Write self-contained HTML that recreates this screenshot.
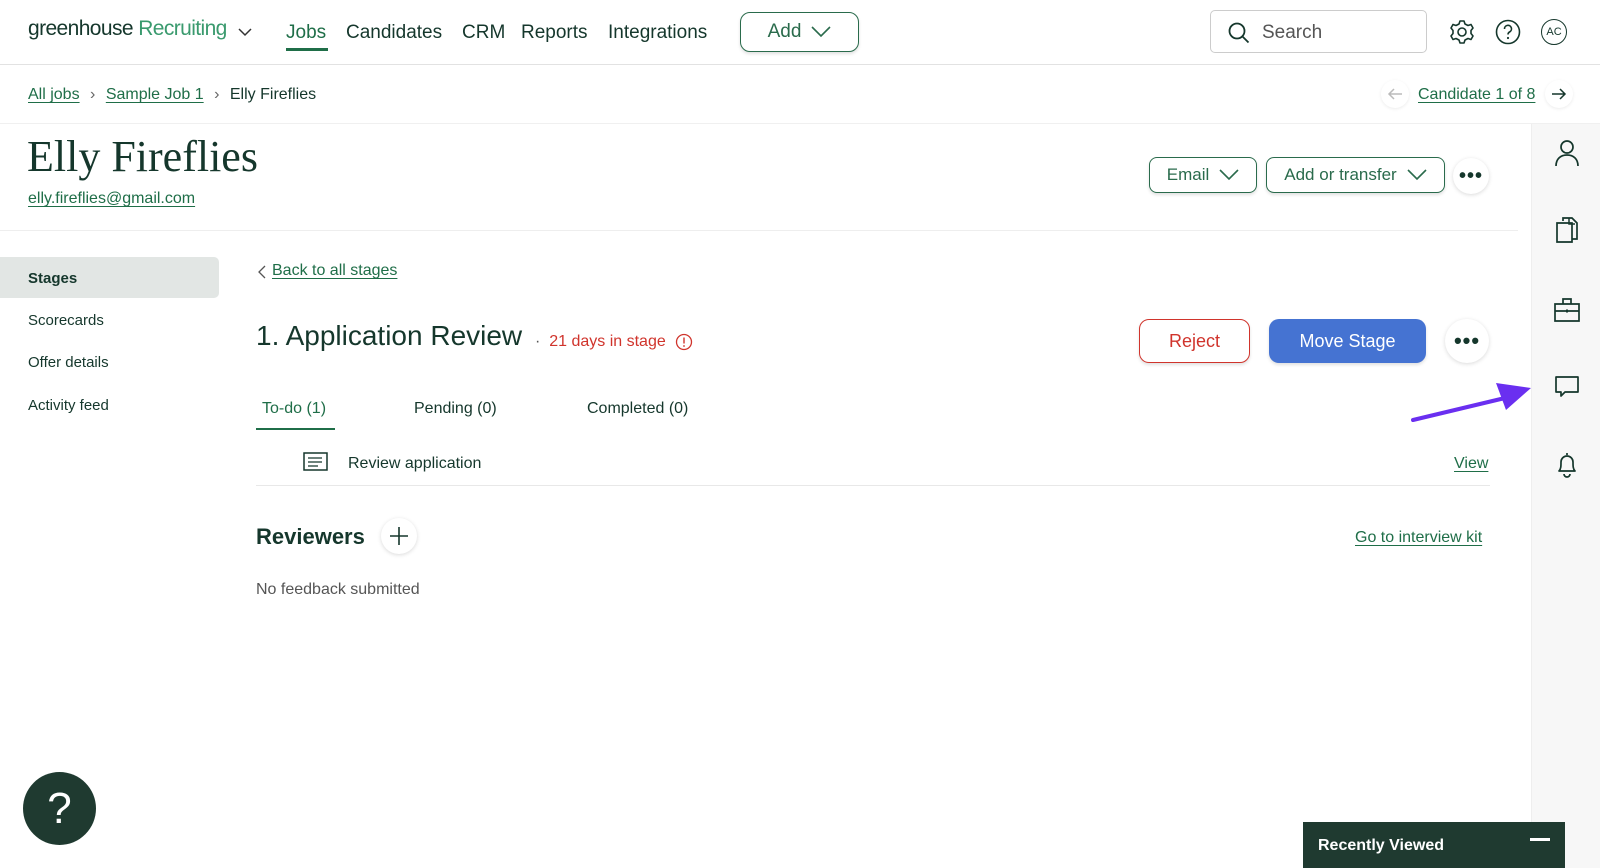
<!DOCTYPE html>
<html><head><meta charset="utf-8"><style>
*{box-sizing:border-box;margin:0;padding:0}
body{width:1600px;height:868px;overflow:hidden;background:#fff;font-family:"Liberation Sans",sans-serif;color:#15372c;position:relative}
.a{position:absolute;white-space:nowrap}
.lnk{color:#1f6e48;text-decoration:underline;text-underline-offset:3px}
.btn{position:absolute;border:1.5px solid #2a6b4c;border-radius:8px;color:#2a6b4c;font-size:17px;display:flex;align-items:center;justify-content:center;gap:10px;box-shadow:0 2px 3px rgba(0,0,0,.12);background:#fff}
.circ{position:absolute;border-radius:50%;background:#fff;box-shadow:0 1px 4px rgba(0,0,0,.15);display:flex;align-items:center;justify-content:center}
svg{display:block}
</style></head><body>
<div class="a" style="left:28px;top:17px;font-size:21px;letter-spacing:-0.6px"><span style="color:#15372c">greenhouse</span> <span style="color:#3a9a6e">Recruiting</span></div>
<svg class="a" style="left:238px;top:28px" width="14" height="9"><path d="M1 1l6 6 6-6" fill="none" stroke="#333" stroke-width="1.5"/></svg>
<div class="a" style="left:286px;top:22px;font-size:19px;color:#1f6e48">Jobs</div>
<div class="a" style="left:286px;top:48px;width:42px;height:3px;background:#1f6e48"></div>
<div class="a" style="left:346px;top:22px;font-size:19px">Candidates</div>
<div class="a" style="left:462px;top:22px;font-size:19px">CRM</div>
<div class="a" style="left:521px;top:22px;font-size:19px">Reports</div>
<div class="a" style="left:608px;top:22px;font-size:19px">Integrations</div>
<div class="btn" style="left:740px;top:12px;width:119px;height:40px;border-radius:10px;font-size:19px">Add <svg width="20" height="12"><path d="M1 1l9 9 9-9" fill="none" stroke="#2a6b4c" stroke-width="1.6"/></svg></div>
<div class="a" style="left:1210px;top:10px;width:217px;height:43px;border:1.5px solid #ccc;border-radius:5px"></div>
<svg class="a" style="left:1227px;top:21px" width="24" height="24"><circle cx="10" cy="10" r="7.5" fill="none" stroke="#15372c" stroke-width="1.8"/><path d="M15.5 15.5l6 6" stroke="#15372c" stroke-width="1.8"/></svg>
<div class="a" style="left:1262px;top:22px;font-size:19px;color:#555">Search</div>
<svg class="a" style="left:1449px;top:19px" width="26" height="26" viewBox="0 0 26 26"><circle cx="13" cy="13" r="4" fill="none" stroke="#15372c" stroke-width="1.6"/><path d="M11 2h4l1 3 3 1.5 3-1 2 3.5-2 2.5v3l2 2.5-2 3.5-3-1-3 1.5-1 3h-4l-1-3-3-1.5-3 1-2-3.5 2-2.5v-3l-2-2.5 2-3.5 3 1 3-1.5z" fill="none" stroke="#15372c" stroke-width="1.6" stroke-linejoin="round"/></svg>
<svg class="a" style="left:1495px;top:19px" width="26" height="26"><circle cx="13" cy="13" r="11.5" fill="none" stroke="#15372c" stroke-width="1.6"/><path d="M9.5 10a3.5 3.5 0 1 1 5 3c-1.2.7-1.5 1.3-1.5 2.5" fill="none" stroke="#15372c" stroke-width="1.6"/><circle cx="13" cy="19" r="1.1" fill="#15372c"/></svg>
<div class="a" style="left:1541px;top:19px;width:26px;height:26px;border:1.6px solid #15372c;border-radius:50%;font-size:11px;display:flex;align-items:center;justify-content:center">AC</div>
<div class="a" style="left:0;top:64px;width:1600px;height:1px;background:#e2e2e2"></div>
<div class="a" style="left:28px;top:86px;font-size:16px"><span class="lnk">All jobs</span> <span style="color:#666;margin:0 6px">›</span> <span class="lnk">Sample Job 1</span> <span style="color:#666;margin:0 6px">›</span> Elly Fireflies</div>
<div class="circ" style="left:1381px;top:80px;width:28px;height:28px;box-shadow:0 1px 3px rgba(0,0,0,.08)"><svg width="16" height="12"><path d="M15 6H2M7 1L2 6l5 5" fill="none" stroke="#bbb" stroke-width="1.5"/></svg></div>
<div class="a lnk" style="left:1418px;top:86px;font-size:16px">Candidate 1 of 8</div>
<div class="circ" style="left:1545px;top:80px;width:28px;height:28px;box-shadow:0 1px 3px rgba(0,0,0,.08)"><svg width="16" height="12"><path d="M1 6h13M9 1l5 5-5 5" fill="none" stroke="#15372c" stroke-width="1.5"/></svg></div>
<div class="a" style="left:0;top:123px;width:1600px;height:1px;background:#f0f0f0"></div>
<div class="a" style="left:1531px;top:124px;width:69px;height:744px;background:#f7f7f7;border-left:1px solid #eee"></div>
<svg class="a" style="left:1554px;top:139px" width="26" height="28"><circle cx="13" cy="8" r="6" fill="none" stroke="#15372c" stroke-width="1.7"/><path d="M2 27c0-7 4.5-11 11-11s11 4 11 11" fill="none" stroke="#15372c" stroke-width="1.7"/></svg>
<svg class="a" style="left:1555px;top:216px" width="24" height="28"><path d="M8 5V2h9l5 5v16h-5" fill="none" stroke="#15372c" stroke-width="1.7"/><path d="M2 7h15v19H2z" fill="none" stroke="#15372c" stroke-width="1.7"/><path d="M14 2v6h6" fill="none" stroke="#15372c" stroke-width="1.5"/></svg>
<svg class="a" style="left:1553px;top:295px" width="28" height="28"><path d="M2 9h24v17H2zM10 9V4h8v5M2 16h24" fill="none" stroke="#15372c" stroke-width="1.7"/><path d="M13 16h2" stroke="#15372c" stroke-width="3"/></svg>
<svg class="a" style="left:1554px;top:375px" width="26" height="26"><path d="M2 2h22v15H11l-4 4v-4H2z" fill="none" stroke="#15372c" stroke-width="1.7" stroke-linejoin="round"/></svg>
<svg class="a" style="left:1555px;top:451px" width="24" height="28"><path d="M12 2v2M4 20c2-2 2-5 2-9a6 6 0 0 1 12 0c0 4 0 7 2 9zM9 23a3 3 0 0 0 6 0" fill="none" stroke="#15372c" stroke-width="1.7" stroke-linejoin="round"/></svg>
<svg class="a" style="left:1405px;top:378px" width="130" height="50"><path d="M8 42L100 20" stroke="#6a2ff0" stroke-width="4" stroke-linecap="round"/><path d="M126 10L91 5l10 27z" fill="#6a2ff0"/></svg>
<div class="a" style="left:27px;top:131px;font-family:'Liberation Serif',serif;font-size:44px;color:#15372c">Elly Fireflies</div>
<div class="a lnk" style="left:28px;top:190px;font-size:16px">elly.fireflies@gmail.com</div>
<div class="btn" style="left:1149px;top:157px;width:108px;height:36px">Email <svg width="20" height="12"><path d="M1 1l9 9 9-9" fill="none" stroke="#2a6b4c" stroke-width="1.6"/></svg></div>
<div class="btn" style="left:1266px;top:157px;width:179px;height:36px">Add or transfer <svg width="20" height="12"><path d="M1 1l9 9 9-9" fill="none" stroke="#2a6b4c" stroke-width="1.6"/></svg></div>
<div class="circ" style="left:1453px;top:158px;width:36px;height:36px;font-size:20px;font-weight:bold;letter-spacing:1px">•••</div>
<div class="a" style="left:0;top:230px;width:1518px;height:1px;background:#eee"></div>
<div class="a" style="left:0;top:257px;width:219px;height:41px;background:#e2e6e4;border-radius:0 5px 5px 0"></div>
<div class="a" style="left:28px;top:270px;font-size:15px;font-weight:bold">Stages</div>
<div class="a" style="left:28px;top:312px;font-size:15px">Scorecards</div>
<div class="a" style="left:28px;top:354px;font-size:15px">Offer details</div>
<div class="a" style="left:28px;top:397px;font-size:15px">Activity feed</div>
<svg class="a" style="left:258px;top:265px" width="8" height="14"><path d="M7 1L1 7l6 6" fill="none" stroke="#555" stroke-width="1.3"/></svg>
<div class="a lnk" style="left:272px;top:262px;font-size:16px">Back to all stages</div>
<div class="a" style="left:256px;top:320px;font-size:28px">1. Application Review</div>
<div class="a" style="left:535px;top:333px;font-size:16px;color:#d0342c"><span style="color:#555">·</span>&nbsp; 21 days in stage</div>
<svg class="a" style="left:675px;top:333px" width="18" height="18"><circle cx="9" cy="9" r="7.5" fill="none" stroke="#d0342c" stroke-width="1.3"/><path d="M9 4.5v6" stroke="#d0342c" stroke-width="1.4"/><circle cx="9" cy="13" r=".9" fill="#d0342c"/></svg>
<div class="btn" style="left:1139px;top:319px;width:111px;height:44px;border-color:#d0342c;color:#d0342c;font-size:18px;border-radius:10px">Reject</div>
<div class="btn" style="left:1269px;top:319px;width:157px;height:44px;border:none;background:#4573d2;color:#fff;font-size:18px;border-radius:10px">Move Stage</div>
<div class="circ" style="left:1445px;top:319px;width:44px;height:44px;font-size:22px;font-weight:bold;letter-spacing:1px">•••</div>
<div class="a" style="left:262px;top:400px;font-size:16px;color:#1f6e48">To-do (1)</div>
<div class="a" style="left:256px;top:428px;width:79px;height:2px;background:#1f6e48"></div>
<div class="a" style="left:414px;top:400px;font-size:16px">Pending (0)</div>
<div class="a" style="left:587px;top:400px;font-size:16px">Completed (0)</div>
<svg class="a" style="left:303px;top:452px" width="26" height="20"><path d="M1 1h23v17H1z" fill="none" stroke="#15372c" stroke-width="1.5"/><path d="M5 6h14M5 10h14M5 14h10" stroke="#15372c" stroke-width="1.3"/></svg>
<div class="a" style="left:348px;top:455px;font-size:16px">Review application</div>
<div class="a lnk" style="left:1454px;top:455px;font-size:16px">View</div>
<div class="a" style="left:256px;top:485px;width:1234px;height:1px;background:#e8e8e8"></div>
<div class="a" style="left:256px;top:524px;font-size:22px;font-weight:bold">Reviewers</div>
<div class="circ" style="left:381px;top:518px;width:36px;height:36px"><svg width="20" height="20"><path d="M10 1v18M1 10h18" stroke="#15372c" stroke-width="1.6"/></svg></div>
<div class="a lnk" style="left:1355px;top:529px;font-size:16px">Go to interview kit</div>
<div class="a" style="left:256px;top:581px;font-size:16px;color:#555">No feedback submitted</div>
<div class="a" style="left:23px;top:772px;width:73px;height:73px;border-radius:50%;background:#1f3a30;color:#fff;font-size:44px;display:flex;align-items:center;justify-content:center">?</div>
<div class="a" style="left:1303px;top:822px;width:262px;height:46px;background:#1f3a30;color:#fff;font-size:16px;font-weight:bold;padding:15px 0 0 15px">Recently Viewed</div>
<div class="a" style="left:1530px;top:838px;width:20px;height:3px;background:#fff"></div>
</body></html>
